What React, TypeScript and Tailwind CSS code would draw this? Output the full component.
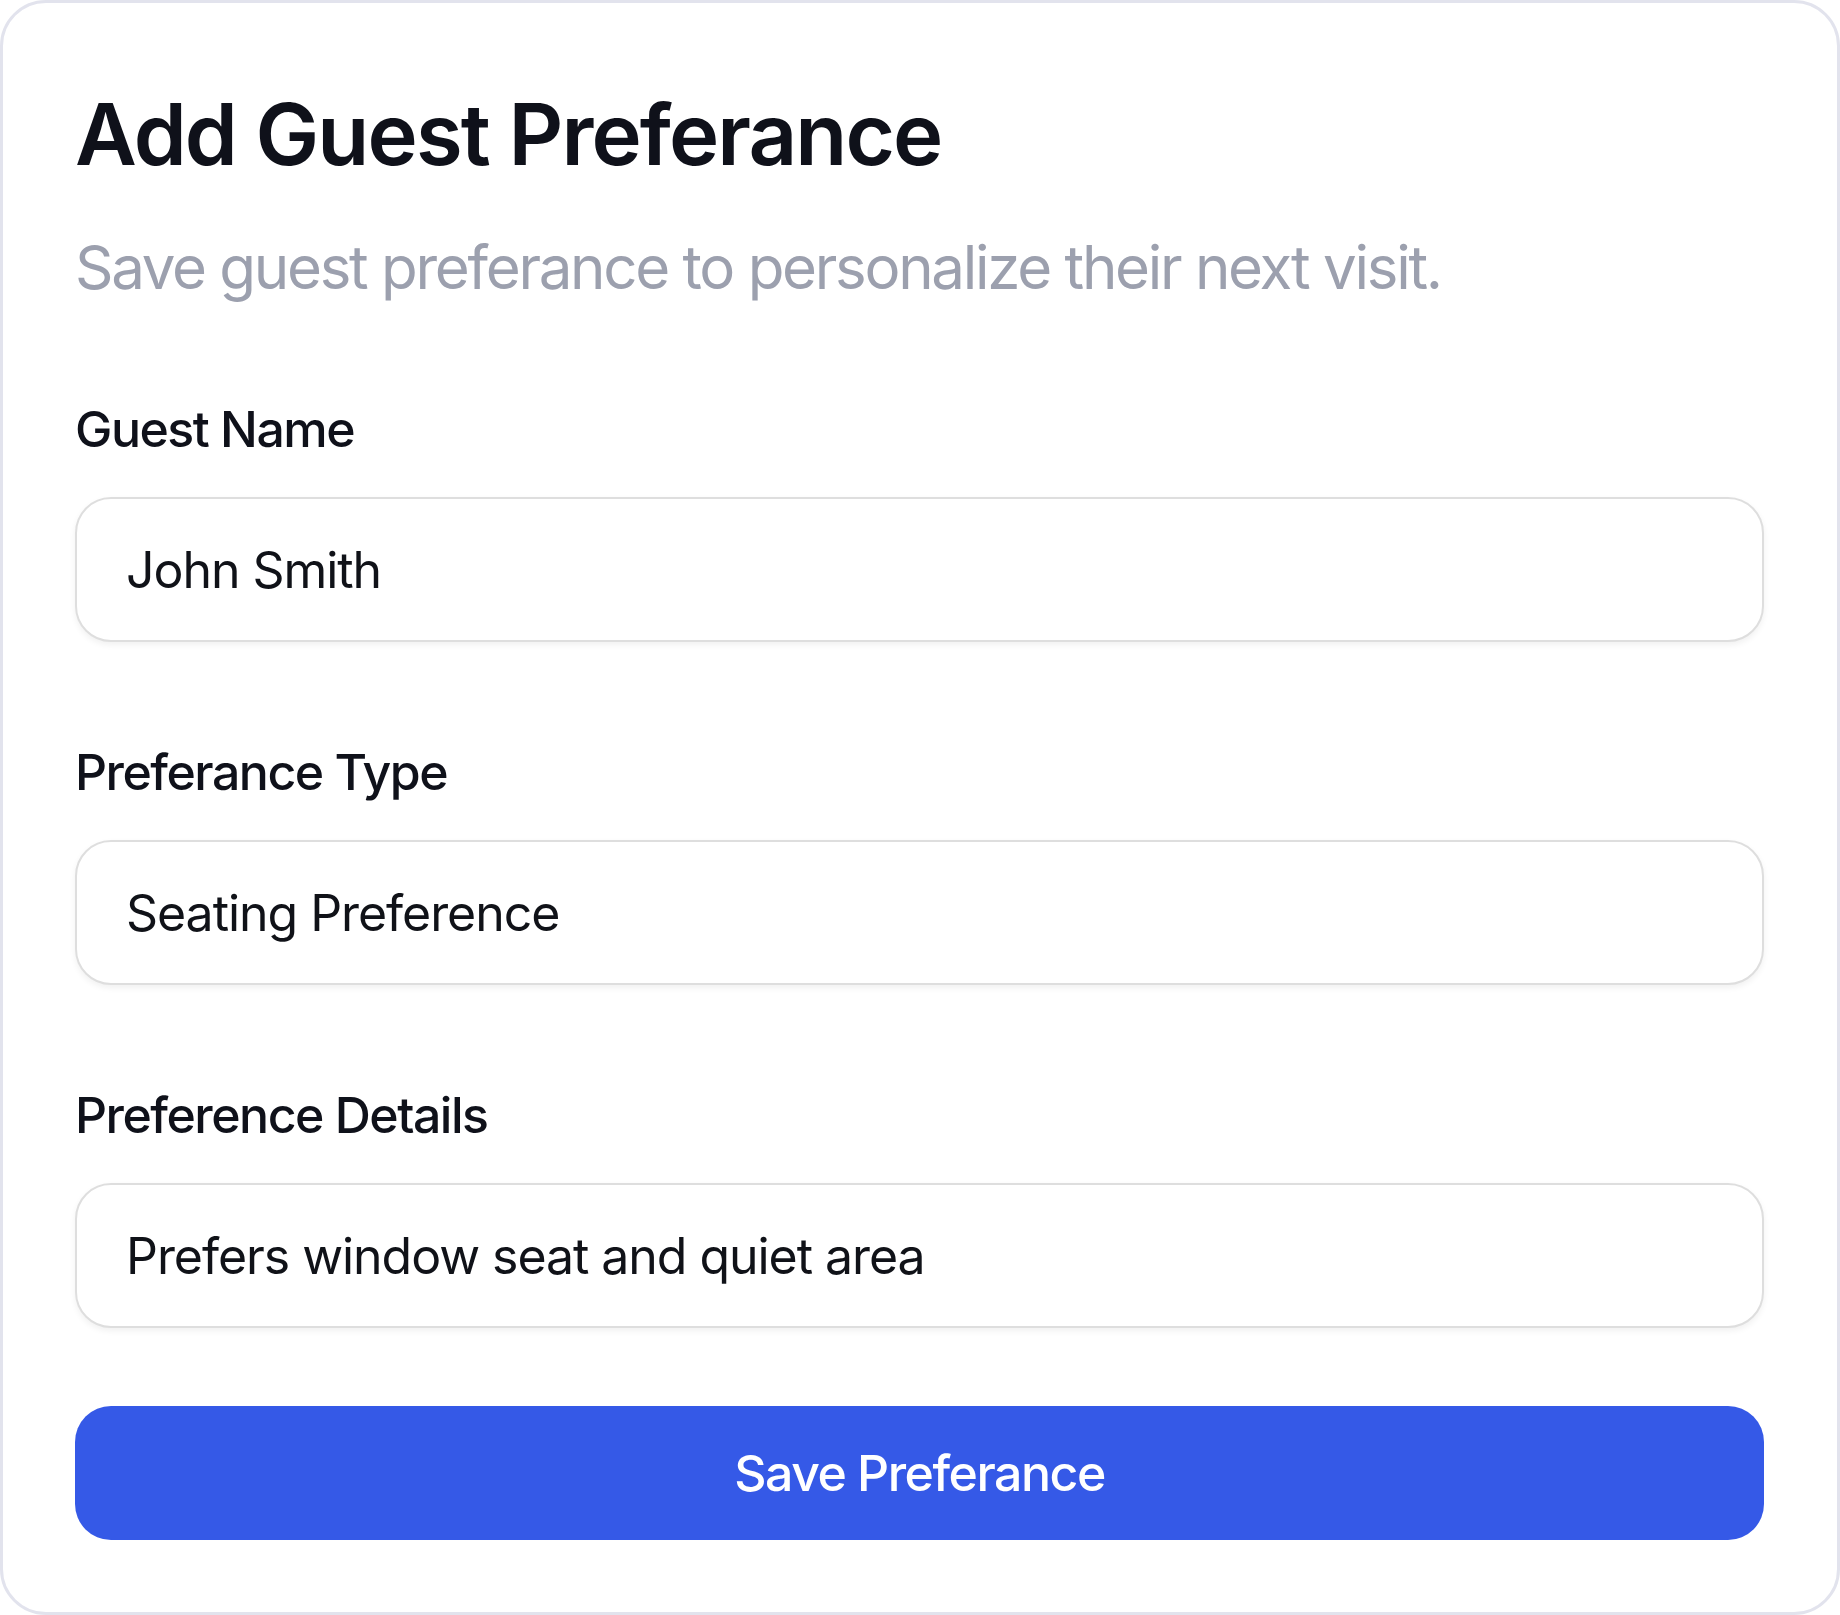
import React, { useState } from 'react';

const fieldClass =
    'w-full h-[145px] rounded-[36px] border-2 border-[#dedede] bg-white px-[49px] text-[50px] leading-none tracking-[-0.021em] text-[#101218] shadow-[0_3px_6px_rgba(0,0,0,0.06)] outline-none';

export default function App() {
    const [guestName, setGuestName] = useState('John Smith');
    const [prefType, setPrefType] = useState('Seating Preference');
    const [details, setDetails] = useState('Prefers window seat and quiet area');

    const fields = [
        { label: 'Guest Name', value: guestName, onChange: setGuestName },
        { label: 'Preferance Type', value: prefType, onChange: setPrefType },
        { label: 'Preference Details', value: details, onChange: setDetails },
    ];

    return (
        <div className="min-h-screen bg-white" style={{ fontFamily: 'Inter, "Noto Sans", sans-serif' }}>
            <div className="w-[1840px] h-[1615px] rounded-[46px] border-[3px] border-[#e2e3ed] bg-white pl-[72px] pr-[73px] pt-[89px]">
                <h1 className="text-[85px] leading-none font-semibold tracking-[-0.022em] text-[#0f111a]">
                    Add Guest Preferance
                </h1>
                <p className="mt-[60px] text-[60px] leading-none tracking-[-0.038em] text-[#9ca0ae]">
                    Save guest preferance to personalize their next visit.
                </p>

                <div className="mt-[107px] flex flex-col gap-[105px]">
                    {fields.map(f => (
                        <div key={f.label} className="flex flex-col gap-[43px]">
                            <label className="text-[50px] leading-none font-medium tracking-[-0.03em] text-[#0f111a]">
                                {f.label}
                            </label>
                            <input
                                value={f.value}
                                onChange={e => f.onChange(e.target.value)}
                                className={fieldClass}
                            />
                        </div>
                    ))}
                </div>

                <button className="mt-[78px] w-full h-[134px] rounded-[36px] bg-[#3559e7] text-[50px] leading-none font-medium tracking-[-0.03em] text-white">
                    Save Preferance
                </button>
            </div>
        </div>
    );
}
